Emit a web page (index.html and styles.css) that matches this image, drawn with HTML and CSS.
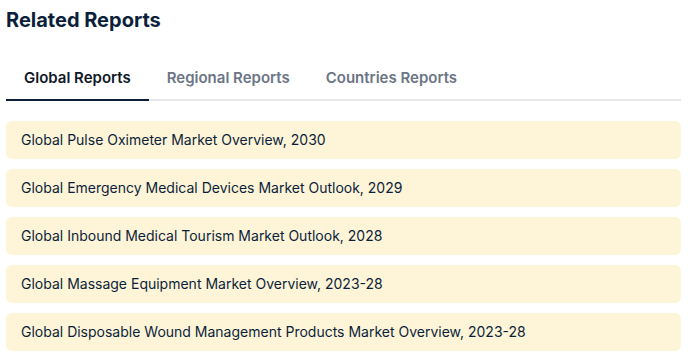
FILE: index.html
```html
<!DOCTYPE html>
<html lang="en">
<head>
    <meta charset="UTF-8">
    <meta name="viewport" content="width=device-width, initial-scale=1.0">
    <title>Related Reports</title>
    <link rel="stylesheet" href="styles.css">
</head>
<body>
    <div class="related">
        <h2 class="heading">Related Reports</h2>
        <div class="tabs">
            <div class="tab active">Global Reports</div>
            <div class="tab">Regional Reports</div>
            <div class="tab">Countries Reports</div>
        </div>
        <ul class="report-list">
            <li class="report">Global Pulse Oximeter Market Overview, 2030</li>
            <li class="report">Global Emergency Medical Devices Market Outlook, 2029</li>
            <li class="report">Global Inbound Medical Tourism Market Outlook, 2028</li>
            <li class="report">Global Massage Equipment Market Overview, 2023-28</li>
            <li class="report">Global Disposable Wound Management Products Market Overview, 2023-28</li>
        </ul>
    </div>
</body>
</html>
```

FILE: styles.css
```css
body {
    margin: 0;
    font-family: 'Inter', 'Liberation Sans', sans-serif;
    background: #fff;
    color: #0b1f3a;
}
.related {
    padding: 8px 7px 0 6px;
}
.heading {
    font-size: 20px;
    font-weight: 700;
    line-height: 24px;
    margin: 0 0 27px 0;
    color: #0b1f3a;
}
.tabs {
    display: flex;
    border-bottom: 2px solid #e8e8ec;
}
.tab {
    padding: 9px 18px 11px;
    font-size: 15px;
    font-weight: 600;
    color: #6b7585;
    line-height: 20px;
    margin-bottom: -2px;
    border-bottom: 2px solid transparent;
}
.tab.active {
    color: #111827;
    border-bottom-color: #0b1f3a;
}
.report-list {
    list-style: none;
    margin: 20px 0 0 0;
    padding: 0;
    display: flex;
    flex-direction: column;
    gap: 10px;
}
.report {
    background: #fef4d8;
    border-radius: 6px;
    padding: 9px 15px;
    font-size: 14px;
    line-height: 20px;
    color: #0b1f3a;
}
```
